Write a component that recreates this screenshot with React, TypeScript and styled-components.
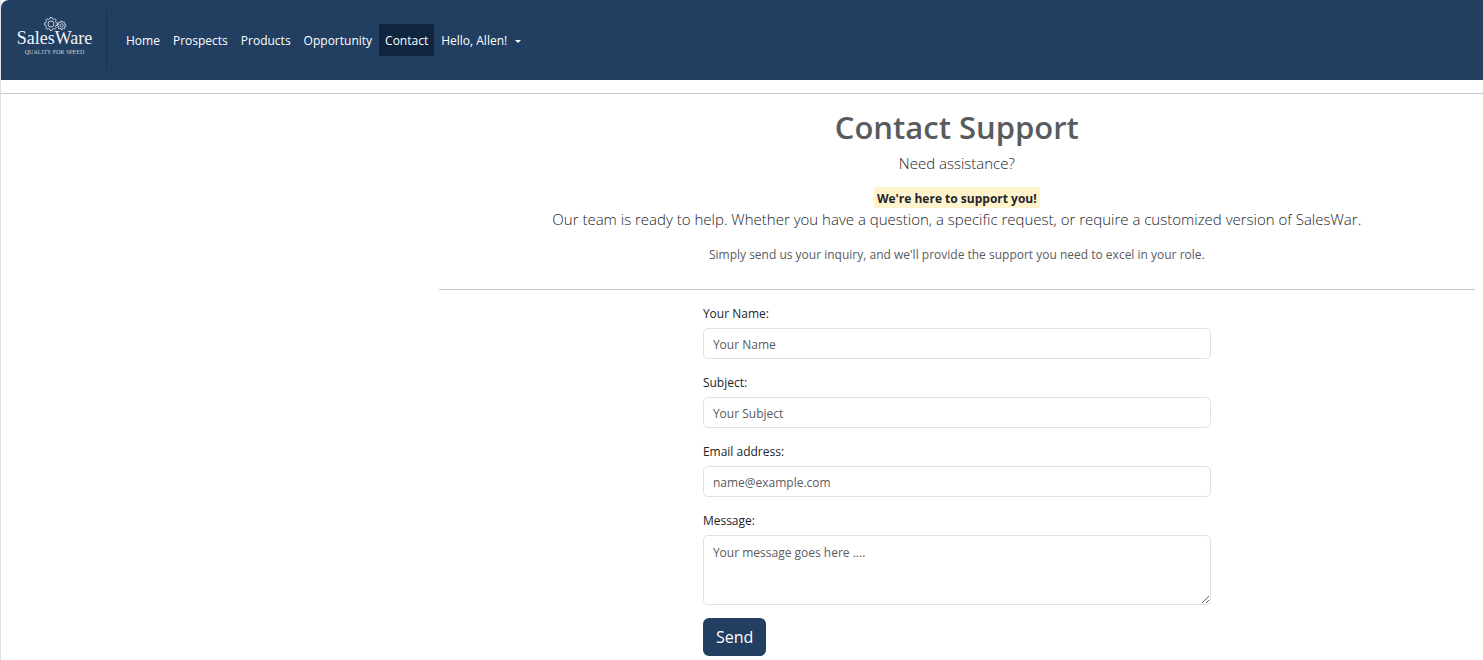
import React from "react";
import styled, { createGlobalStyle } from "styled-components";

const GlobalStyle = createGlobalStyle`
  *, *::before, *::after { box-sizing: border-box; }
  body {
    margin: 0;
    background: #fff;
    color: #212529;
    font-family: "Open Sans", "Noto Sans", sans-serif;
    font-size: 12px;
    line-height: 22px;
  }
`;

const Page = styled.div`
  border-left: 1px solid #dee2e6;
`;

const NavBar = styled.nav`
  display: flex;
  align-items: center;
  height: 80px;
  background: #223e61;
  border-top-left-radius: 8px;
`;

const Brand = styled.a`
  display: flex;
  flex-direction: column;
  align-items: center;
  width: 106px;
  height: 60px;
  padding: 7px 0 0 2px;
  border-right: 1px solid #1b3452;
  color: #f1f4f7;
  text-decoration: none;
  font-family: "Liberation Serif", serif;
`;

const BrandName = styled.span`
  font-size: 18px;
  line-height: 14px;
`;

const Tagline = styled.span`
  margin-top: 3px;
  color: #c6cfda;
  font-size: 6px;
  line-height: 8px;
`;

const NavList = styled.ul`
  display: flex;
  gap: 1px;
  margin: 0 0 0 13px;
  padding: 0;
  list-style: none;
`;

const NavLink = styled.a<{ $active?: boolean }>`
  display: flex;
  align-items: center;
  height: 32px;
  padding: 2px 6px 0;
  background: ${(p) => (p.$active ? "#10253f" : "transparent")};
  color: #fff;
  text-decoration: none;
  white-space: nowrap;
`;

const Caret = styled.span`
  margin-left: 8px;
  border-top: 3px solid #fff;
  border-left: 3px solid transparent;
  border-right: 3px solid transparent;
`;

const Rule = styled.hr`
  width: 100%;
  margin: 13px 0;
  border: 0;
  border-top: 1px solid #c8c9ca;
`;

const Main = styled.main`
  display: flex;
  flex-direction: column;
  align-items: center;
  width: calc(70% - 1px);
  margin: 0 8px 0 auto;
`;

const Title = styled.h1`
  margin: 1px 0 6px;
  color: #595c5f;
  font-size: 31px;
  font-weight: 600;
  line-height: 38px;
`;

const Lead = styled.p`
  margin: 0;
  font-size: 15px;
  font-weight: 300;
  line-height: 22px;
  text-align: center;
`;

const Highlight = styled.mark`
  margin-top: 13px;
  padding: 2px 3px 0;
  background: #fff3cd;
  color: #212529;
  font-weight: 700;
  line-height: 19px;
`;

const Note = styled.p`
  margin: 14px 0 10px;
  color: #595c5f;
  text-align: center;
`;

const Form = styled.form`
  width: 49%;
  padding-bottom: 4px;
`;

const Field = styled.div`
  display: flex;
  flex-direction: column;
  gap: 3px;
  margin-bottom: 13px;
`;

const Input = styled.input`
  width: 100%;
  height: 31px;
  padding: 2px 9px 0;
  border: 1px solid #dee2e6;
  border-radius: 5px;
  background: #fff;
  color: #212529;
  font: inherit;
  &::placeholder { color: #595c5f; opacity: 1; }
`;

const TextArea = styled(Input)`
  height: 70px;
  padding: 6px 9px;
  resize: vertical;
`;

const SendButton = styled.button`
  height: 38px;
  padding: 0 13px;
  border: 0;
  border-radius: 6px;
  background: #223e61;
  color: #fff;
  font: inherit;
  font-size: 16px;
`;

function gear(cx: number, cy: number, outer: number, inner: number, teeth: number) {
  const points: string[] = [];
  const step = (Math.PI * 2) / teeth;
  for (let i = 0; i < teeth; i++) {
    [[-0.32, inner], [-0.2, outer], [0.2, outer], [0.32, inner]].forEach(([f, r]) => {
      const a = (i + f) * step;
      points.push(`${(cx + r * Math.cos(a)).toFixed(2)},${(cy + r * Math.sin(a)).toFixed(2)}`);
    });
  }
  return points.join(" ");
}

function Gears() {
  return (
    <svg width="24" height="14" viewBox="0 0 24 14" fill="none" stroke="#d5dce4" strokeWidth="0.9" aria-hidden="true">
      <polygon points={gear(8, 7, 6.6, 5.2, 8)} />
      <circle cx="8" cy="7" r="3" />
      <polygon points={gear(18.6, 8.4, 4.3, 3.3, 8)} />
      <circle cx="18.6" cy="8.4" r="1.6" />
    </svg>
  );
}

const links = ["Home", "Prospects", "Products", "Opportunity", "Contact"];

const fields = [
  { id: "name", label: "Your Name:", type: "text", placeholder: "Your Name" },
  { id: "subject", label: "Subject:", type: "text", placeholder: "Your Subject" },
  { id: "email", label: "Email address:", type: "email", placeholder: "name@example.com" },
];

export default function App() {
  return (
    <Page>
      <GlobalStyle />
      <NavBar>
        <Brand href="#">
          <Gears />
          <BrandName>SalesWare</BrandName>
          <Tagline>QUALITY FOR SPEED</Tagline>
        </Brand>
        <NavList>
          {links.map((name) => (
            <li key={name}>
              <NavLink href="#" $active={name === "Contact"}>{name}</NavLink>
            </li>
          ))}
          <li>
            <NavLink href="#">Hello, Allen!<Caret /></NavLink>
          </li>
        </NavList>
      </NavBar>
      <Rule />
      <Main>
        <Title>Contact Support</Title>
        <Lead>Need assistance?</Lead>
        <Highlight>We're here to support you!</Highlight>
        <Lead>
          Our team is ready to help. Whether you have a question, a specific request, or require a customized version of SalesWar.
        </Lead>
        <Note>Simply send us your inquiry, and we'll provide the support you need to excel in your role.</Note>
        <Rule />
        <Form onSubmit={(e) => e.preventDefault()}>
          {fields.map((f) => (
            <Field key={f.id}>
              <label htmlFor={f.id}>{f.label}</label>
              <Input id={f.id} type={f.type} placeholder={f.placeholder} />
            </Field>
          ))}
          <Field>
            <label htmlFor="message">Message:</label>
            <TextArea as="textarea" id="message" placeholder="Your message goes here ...." />
          </Field>
          <SendButton type="submit">Send</SendButton>
        </Form>
      </Main>
    </Page>
  );
}
